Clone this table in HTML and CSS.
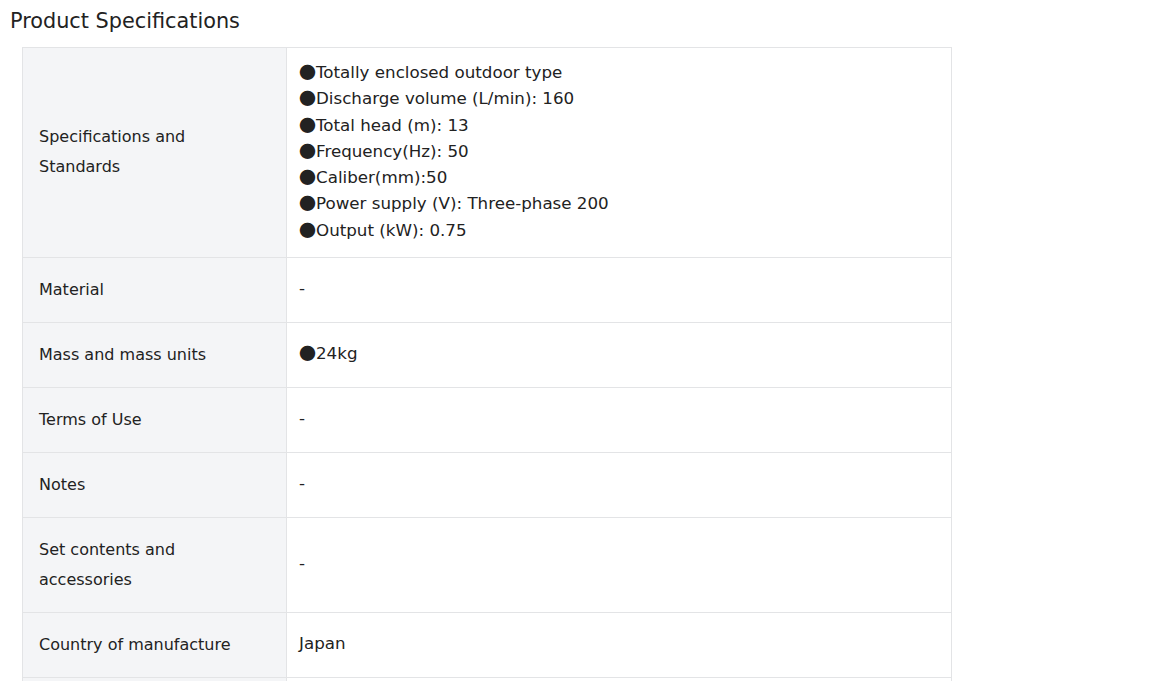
FILE: index.html
```html
<!DOCTYPE html>
<html>
<head>
<meta charset="utf-8">
<link rel="stylesheet" href="styles.css">
</head>
<body>
<div class="page">
  <h2 class="title">Product Specifications</h2>
  <table class="spec">
    <tr>
      <th>Specifications and Standards</th>
      <td class="multi"><span class="b">●</span>Totally enclosed outdoor type<br><span class="b">●</span>Discharge volume (L/min): 160<br><span class="b">●</span>Total head (m): 13<br><span class="b">●</span>Frequency(Hz): 50<br><span class="b">●</span>Caliber(mm):50<br><span class="b">●</span>Power supply (V): Three-phase 200<br><span class="b">●</span>Output (kW): 0.75</td>
    </tr>
    <tr><th>Material</th><td>-</td></tr>
    <tr><th>Mass and mass units</th><td><span class="b">●</span>24kg</td></tr>
    <tr><th>Terms of Use</th><td>-</td></tr>
    <tr><th>Notes</th><td>-</td></tr>
    <tr><th>Set contents and accessories</th><td>-</td></tr>
    <tr><th>Country of manufacture</th><td>Japan</td></tr>
    <tr><th>&nbsp;</th><td>&nbsp;</td></tr>
  </table>
</div>
</body>
</html>
```
FILE: styles.css
```css
html, body { margin: 0; padding: 0; background: #fff; }
body { font-family: "DejaVu Sans", Verdana, sans-serif; color: #222; }
.page { padding: 0 0 0 10px; }
.title { margin: 0; padding-top: 7px; font-size: 20.8px; font-weight: normal; line-height: 28px; color: #222; }
.spec { margin: 12px 0 0 12px; border-collapse: collapse; width: 930px; }
.spec th, .spec td { border: 1px solid #e3e4e6; text-align: left; font-weight: normal; vertical-align: middle; }
.spec th { width: 231px; background: #f4f5f7; padding: 17px 16px 17px 16px; font-size: 16px; line-height: 30px; }
.spec td { padding: 11px 12px 13.5px 12px; font-size: 16.7px; line-height: 26.3px; }
.spec td .b { font-family: "Noto Sans CJK JP", sans-serif; font-size: 17px; line-height: 0; position: relative; top: 1px; }
```
